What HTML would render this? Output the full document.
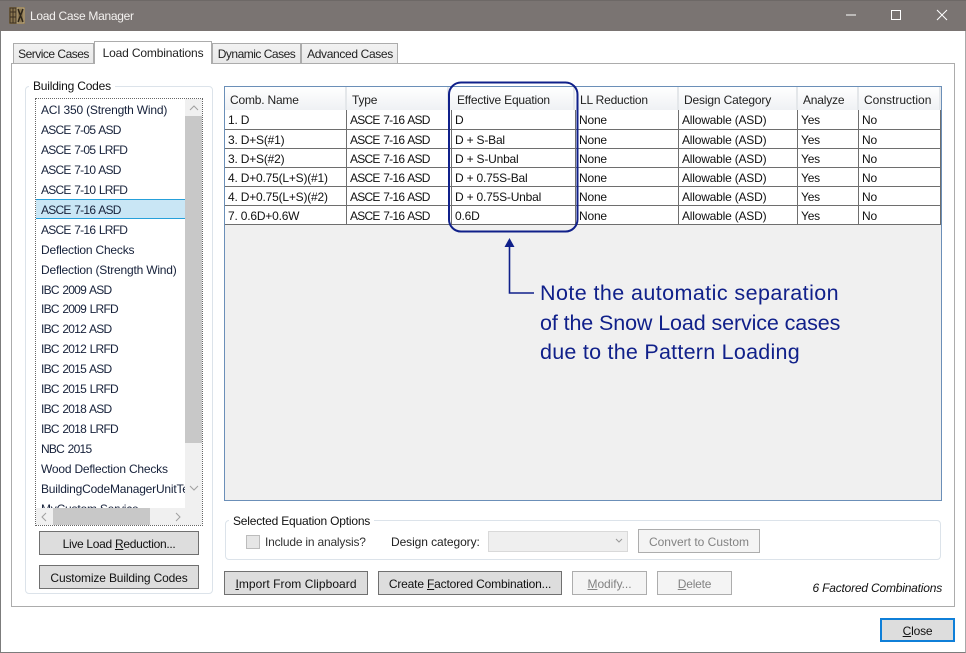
<!DOCTYPE html>
<html><head><meta charset="utf-8"><style>
html,body{margin:0;padding:0}
body{width:966px;height:653px;position:relative;overflow:hidden;background:#fff;font:12px/16px "Liberation Sans",sans-serif;color:#111;letter-spacing:-.2px}
div,span.a{position:absolute;box-sizing:border-box;white-space:nowrap}
.tab{background:linear-gradient(#f2f2f2,#e8e8e8);border:1px solid #acacac;border-bottom:0;height:20px;top:43px;line-height:20px;text-align:center;color:#222}
.grp{border:1px solid #dce3ea;border-radius:4px}
.lab{background:#fff;padding:0 4px;height:16px}
.li{left:5px;height:20px;line-height:20px;width:144px;overflow:hidden;color:#16213a}
.n{letter-spacing:-.75px;word-spacing:1px}
.btn{background:#ddd;border:1px solid #707070;height:24px;line-height:24px;text-align:center;color:#111}
.dis{background:#f4f4f4;border-color:#adadad;color:#838383}
table{position:absolute;left:225px;top:110px;border-collapse:separate;border-spacing:0;table-layout:fixed;background:#fff;width:716px}
td{border-right:1px solid #6e6e6e;border-bottom:1px solid #6e6e6e;height:19px;padding:2px 0 0 3px;box-sizing:border-box;line-height:16px;overflow:hidden;white-space:nowrap;vertical-align:top}
tr:first-child td{height:20px}
.h{top:87px;height:23px;line-height:27px;background:linear-gradient(#fff,#eff1f4);border-right:2px solid #e4e7ea;padding-left:5px;color:#222}
</style></head><body>
<div style="left:0;top:0;width:966px;height:653px;border:1px solid #7c7c7c;border-top:0;border-right-color:#a9a9a9"></div>
<div style="left:0;top:0;width:966px;height:31px;background:#7a7472;border-top:1px solid #6d6866"></div>
<svg style="position:absolute;left:9px;top:7px" width="16" height="17" viewBox="0 0 16 17"><rect width="16" height="17" fill="#8a7650"/><path d="M1 1h6v15H1zM1 5h6M1 10h6M4 1v15" stroke="#3a2e20" fill="none"/><path d="M9 2l5 13M14 2L9 15" stroke="#2c2418" stroke-width="1.5"/><rect x="8" y="1" width="7" height="15" fill="none" stroke="#d2c29c" stroke-width=".6"/></svg>
<div style="left:30px;top:8px;color:#f4f2f0;letter-spacing:-.3px">Load Case Manager</div>
<svg style="position:absolute;left:840px;top:5px" width="120" height="22"><path d="M6 10h10" stroke="#fff"/><rect x="51.5" y="5.5" width="9" height="9" fill="none" stroke="#fff"/><path d="M97 5l10 10M107 5L97 15" stroke="#fff" fill="none"/></svg>

<div style="left:11px;top:63px;width:944px;height:544px;border:1px solid #acacac"></div>
<div class="tab" style="left:13px;width:81px;letter-spacing:-.5px">Service Cases</div>
<div class="tab" style="left:212px;width:89px;letter-spacing:-.5px">Dynamic Cases</div>
<div class="tab" style="left:301px;width:97px;letter-spacing:-.35px;padding-left:1px">Advanced Cases</div>
<div class="tab" style="left:94px;width:118px;top:41px;height:23px;background:#fff;line-height:23px;letter-spacing:-.15px">Load Combinations</div>

<div class="grp" style="left:25px;top:86px;width:188px;height:508px"></div>
<div class="lab" style="left:29px;top:78px">Building Codes</div>
<div style="left:35px;top:98px;width:168px;height:428px;border:1px dotted #666;overflow:hidden">
  <div style="left:0;top:0;width:149px;height:409px;overflow:hidden;background:#fff">
    <div style="left:0;top:100px;width:149px;height:20px;background:#c9e6f5;border:1px solid #26a0da;border-width:1px 0"></div>
    <div class="li" style="top:1px">ACI 350 (Strength Wind)</div>
    <div class="li n" style="top:21px">ASCE 7-05 ASD</div>
    <div class="li n" style="top:41px">ASCE 7-05 LRFD</div>
    <div class="li n" style="top:61px">ASCE 7-10 ASD</div>
    <div class="li n" style="top:81px">ASCE 7-10 LRFD</div>
    <div class="li n" style="top:101px">ASCE 7-16 ASD</div>
    <div class="li n" style="top:121px">ASCE 7-16 LRFD</div>
    <div class="li" style="top:141px">Deflection Checks</div>
    <div class="li" style="top:161px">Deflection (Strength Wind)</div>
    <div class="li n" style="top:181px">IBC 2009 ASD</div>
    <div class="li n" style="top:200px">IBC 2009 LRFD</div>
    <div class="li n" style="top:220px">IBC 2012 ASD</div>
    <div class="li n" style="top:240px">IBC 2012 LRFD</div>
    <div class="li n" style="top:260px">IBC 2015 ASD</div>
    <div class="li n" style="top:280px">IBC 2015 LRFD</div>
    <div class="li n" style="top:300px">IBC 2018 ASD</div>
    <div class="li n" style="top:320px">IBC 2018 LRFD</div>
    <div class="li n" style="top:340px">NBC 2015</div>
    <div class="li" style="top:360px">Wood Deflection Checks</div>
    <div class="li" style="top:380px">BuildingCodeManagerUnitTest</div>
    <div class="li" style="top:400px">MyCustom Service</div>
  </div>
  <div style="left:149px;top:0;width:18px;height:409px;background:#f0f0f0"></div>
  <div style="left:149px;top:17px;width:18px;height:327px;background:#c8c8c8"></div>
  <div style="left:0;top:409px;width:167px;height:18px;background:#f0f0f0"></div>
  <div style="left:17px;top:409px;width:97px;height:18px;background:#c8c8c8"></div>
  <svg style="position:absolute;left:0;top:0" width="167" height="427"><path d="M154 11l4-4 4 4M154 387l4 4 4-4M10 414l-4 4 4 4M140 414l4 4-4 4" fill="none" stroke="#a0a0a0"/></svg>
</div>
<div class="btn" style="left:39px;top:531px;width:160px;letter-spacing:-.3px">Live Load <u>R</u>eduction...</div>
<div class="btn" style="left:39px;top:565px;width:160px;letter-spacing:-.15px">Customize Building Codes</div>

<div style="left:224px;top:86px;width:718px;height:415px;border:1px solid #6b8fb8;background:#f0f0f0"></div>
<div class="h" style="left:225px;width:122px">Comb. Name</div>
<div class="h" style="left:347px;width:102px">Type</div>
<div class="h" style="left:449px;width:126px;padding-left:8px">Effective Equation</div>
<div class="h" style="left:575px;width:104px">LL Reduction</div>
<div class="h" style="left:679px;width:119px;letter-spacing:-.15px">Design Category</div>
<div class="h" style="left:798px;width:61px">Analyze</div>
<div class="h" style="left:859px;width:82px;letter-spacing:0">Construction</div>
<table><colgroup><col style="width:122px"><col style="width:105px"><col style="width:124px"><col style="width:103px"><col style="width:119px"><col style="width:61px"><col style="width:82px"></colgroup>
<tr><td>1. D</td><td class="n">ASCE 7-16 ASD</td><td>D</td><td>None</td><td>Allowable (ASD)</td><td>Yes</td><td>No</td></tr>
<tr><td>3. D+S(#1)</td><td class="n">ASCE 7-16 ASD</td><td>D + S-Bal</td><td>None</td><td>Allowable (ASD)</td><td>Yes</td><td>No</td></tr>
<tr><td>3. D+S(#2)</td><td class="n">ASCE 7-16 ASD</td><td>D + S-Unbal</td><td>None</td><td>Allowable (ASD)</td><td>Yes</td><td>No</td></tr>
<tr><td>4. D+0.75(L+S)(#1)</td><td class="n">ASCE 7-16 ASD</td><td>D + 0.75S-Bal</td><td>None</td><td>Allowable (ASD)</td><td>Yes</td><td>No</td></tr>
<tr><td>4. D+0.75(L+S)(#2)</td><td class="n">ASCE 7-16 ASD</td><td>D + 0.75S-Unbal</td><td>None</td><td>Allowable (ASD)</td><td>Yes</td><td>No</td></tr>
<tr><td>7. 0.6D+0.6W</td><td class="n">ASCE 7-16 ASD</td><td>0.6D</td><td>None</td><td>Allowable (ASD)</td><td>Yes</td><td>No</td></tr>
</table>

<svg style="position:absolute;left:0;top:0" width="966" height="653"><rect x="449" y="82.5" width="128.5" height="149" rx="12" fill="none" stroke="#10208a" stroke-width="2"/><path d="M509.5 244V293H534" fill="none" stroke="#10208a" stroke-width="1.6"/><path d="M509.5 238l5 9h-10z" fill="#10208a"/></svg>
<div style="left:540px;top:279px;font-size:21.5px;line-height:29.5px;color:#10208a;letter-spacing:.42px">Note the automatic separation<br><span style="letter-spacing:-.11px">of the Snow Load service cases</span><br><span style="letter-spacing:.25px">due to the Pattern Loading</span></div>

<div class="grp" style="left:225px;top:520px;width:716px;height:40px"></div>
<div class="lab" style="left:229px;top:513px">Selected Equation Options</div>
<div style="left:246px;top:535px;width:14px;height:14px;background:#e6e6e6;border:1px solid #bcbcbc"></div>
<div style="left:265px;top:534px;color:#333">Include in analysis?</div>
<div style="left:391px;top:534px;color:#222;letter-spacing:-.08px">Design category:</div>
<div style="left:488px;top:531px;width:140px;height:21px;background:#efefef;border:1px solid #d9d9d9"></div>
<svg style="position:absolute;left:615px;top:538px" width="8" height="6"><path d="M1 1l3 3 3-3" fill="none" stroke="#999"/></svg>
<div class="btn dis" style="left:638px;top:529px;width:122px;letter-spacing:0">Convert to Custom</div>

<div class="btn" style="left:224px;top:571px;width:144px;letter-spacing:.05px"><u>I</u>mport From Clipboard</div>
<div class="btn" style="left:378px;top:571px;width:184px;letter-spacing:-.17px">Create <u>F</u>actored Combination...</div>
<div class="btn dis" style="left:572px;top:571px;width:75px;letter-spacing:-.05px"><u>M</u>odify...</div>
<div class="btn dis" style="left:657px;top:571px;width:75px"><u>D</u>elete</div>
<div style="right:24px;top:580px;font-style:italic;color:#111">6 Factored Combinations</div>
<div class="btn" style="left:880px;top:618px;width:75px;border:2px solid #0f7fd8;height:24px;line-height:23px"><u>C</u>lose</div>
</body></html>
